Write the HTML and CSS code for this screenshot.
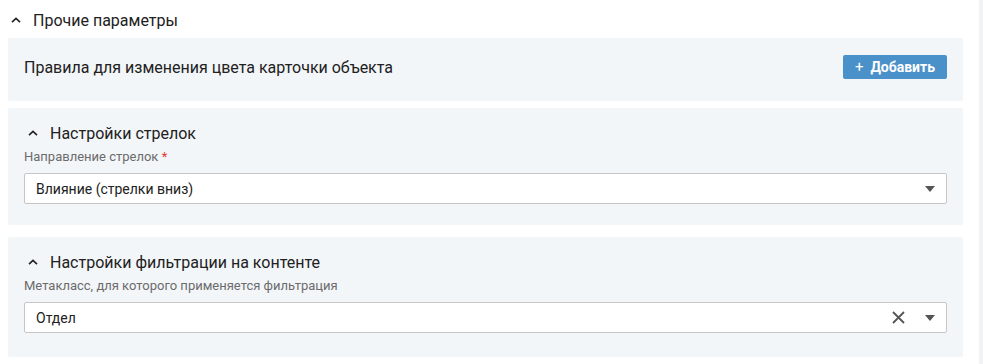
FILE: index.html
```html
<!DOCTYPE html>
<html lang="ru">
<head>
    <meta charset="UTF-8">
    <title>Прочие параметры</title>
    <link rel="stylesheet" href="styles.css">
</head>
<body>
    <div class="page">
        <div class="content">
            <div class="section-title">
                <svg class="chevron" width="10" height="6" viewBox="0 0 10 6"><path d="M1 5.2 L5 1.4 L9 5.2" fill="none" stroke="#222" stroke-width="1.6"/></svg>
                <span>Прочие параметры</span>
            </div>

            <div class="panel panel-rules">
                <span class="rules-text">Правила для изменения цвета карточки объекта</span>
                <button class="btn-add"><span class="plus">+</span>Добавить</button>
            </div>

            <div class="panel">
                <div class="panel-title">
                    <svg class="chevron" width="10" height="6" viewBox="0 0 10 6"><path d="M1 5.2 L5 1.4 L9 5.2" fill="none" stroke="#222" stroke-width="1.6"/></svg>
                    <span>Настройки стрелок</span>
                </div>
                <div class="field-label">Направление стрелок <span class="req">*</span></div>
                <div class="select">
                    <span class="select-value">Влияние (стрелки вниз)</span>
                    <span class="caret"></span>
                </div>
            </div>

            <div class="panel panel-last">
                <div class="panel-title">
                    <svg class="chevron" width="10" height="6" viewBox="0 0 10 6"><path d="M1 5.2 L5 1.4 L9 5.2" fill="none" stroke="#222" stroke-width="1.6"/></svg>
                    <span>Настройки фильтрации на контенте</span>
                </div>
                <div class="field-label">Метакласс, для которого применяется фильтрация</div>
                <div class="select">
                    <span class="select-value">Отдел</span>
                    <svg class="clear" width="13" height="13" viewBox="0 0 13 13"><path d="M1 1 L12 12 M12 1 L1 12" stroke="#555" stroke-width="1.8"/></svg>
                    <span class="caret"></span>
                </div>
            </div>
        </div>
        <div class="scroll-track"></div>
    </div>
</body>
</html>
```

FILE: styles.css
```css
* {
    margin: 0;
    padding: 0;
    box-sizing: border-box;
    font-family: Roboto, 'Noto Sans', sans-serif;
}

body {
    background: white;
    color: #212121;
}

.page {
    display: flex;
    height: 364px;
}

.content {
    width: 955px;
    margin-left: 8px;
}

.scroll-track {
    width: 4px;
    margin-left: 16px;
    background: #f1f4f7;
}

.section-title {
    display: flex;
    align-items: center;
    height: 38px;
    padding-left: 3px;
    padding-top: 2px;
    font-size: 16px;
}

.chevron {
    margin-right: 12px;
}

.panel {
    background: #f3f6f9;
    border-radius: 2px;
    padding: 13px 16px 21px;
}

.panel-rules {
    display: flex;
    align-items: center;
    justify-content: space-between;
    height: 63px;
    padding-top: 0;
    padding-bottom: 5px;
    margin-bottom: 7px;
    font-size: 16px;
}

.panel-rules + .panel {
    margin-bottom: 12px;
}

.panel-last {
    padding-bottom: 24px;
}

.btn-add {
    display: flex;
    align-items: center;
    height: 24px;
    padding: 0 12px;
    background: #4b91c9;
    color: white;
    border: none;
    border-radius: 2px;
    font-size: 14px;
    font-weight: 700;
}

.plus {
    font-weight: 400;
    font-size: 15px;
    margin-right: 7px;
}

.panel-title {
    display: flex;
    align-items: center;
    height: 24px;
    padding-left: 4px;
    font-size: 16px;
}

.field-label {
    margin-top: 4px;
    height: 16px;
    line-height: 16px;
    font-size: 13px;
    color: #6b6b6b;
}

.req {
    color: #e53935;
}

.select {
    display: flex;
    align-items: center;
    height: 31px;
    margin-top: 8px;
    padding: 0 11px;
    background: white;
    border: 1px solid #c6c6c6;
    border-radius: 2px;
    font-size: 14px;
}

.select-value {
    flex: 1;
}

.clear {
    margin-right: 20px;
}

.caret {
    width: 0;
    height: 0;
    border-left: 5px solid transparent;
    border-right: 5px solid transparent;
    border-top: 6px solid #555;
}
```
